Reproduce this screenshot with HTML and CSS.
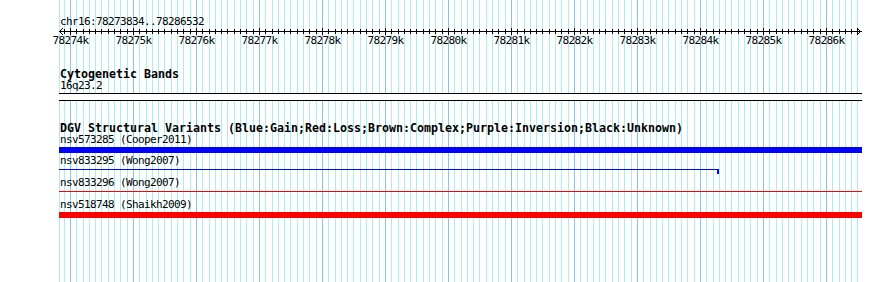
FILE: index.html
```html
<!DOCTYPE html>
<html lang="en">
<head>
    <meta charset="UTF-8">
    <title>chr16:78273834..78286532</title>
    <link rel="stylesheet" href="styles.css">
</head>
<body>

    <div class="panel">
        <!-- Grid lines behind the tracks -->
        <svg class="grid" id="grid" width="890" height="282"></svg>

        <div class="tracks">
            <!-- Ruler -->
            <div class="ruler">
                <div class="label">chr16:78273834..78286532</div>
                <svg class="scale" id="scale" width="803" height="18"></svg>
            </div>

            <!-- Cytogenetic bands track -->
            <div class="track cyto">
                <div class="track-title">Cytogenetic Bands</div>
                <div class="label">16q23.2</div>
                <div class="band"></div>
            </div>

            <!-- DGV track -->
            <div class="track dgv">
                <div class="track-title">DGV Structural Variants (Blue:Gain;Red:Loss;Brown:Complex;Purple:Inversion;Black:Unknown)</div>

                <div class="feature">
                    <div class="label">nsv573285 (Cooper2011)</div>
                    <div class="glyph"><div class="bar gain"></div></div>
                </div>

                <div class="feature">
                    <div class="label">nsv833295 (Wong2007)</div>
                    <div class="glyph">
                        <div class="line gain" style="width: 659px"></div>
                        <div class="cap gain" style="left: 658px"></div>
                    </div>
                </div>

                <div class="feature">
                    <div class="label">nsv833296 (Wong2007)</div>
                    <div class="glyph"><div class="line loss"></div></div>
                </div>

                <div class="feature">
                    <div class="label">nsv518748 (Shaikh2009)</div>
                    <div class="glyph"><div class="bar loss"></div></div>
                </div>
            </div>
        </div>
    </div>

    <script>
        const start = 78273834;
        const end = 78286532;
        const ns = 'http://www.w3.org/2000/svg';

        // Genome position to pixel column
        function toX(pos) {
            return Math.floor(60 + (pos - start) * 800 / (end - start));
        }

        function add(svg, tag, attrs, text) {
            const el = document.createElementNS(ns, tag);
            for (const k in attrs) el.setAttribute(k, attrs[k]);
            if (text) el.textContent = text;
            svg.appendChild(el);
            return el;
        }

        const grid = document.getElementById('grid');
        const scale = document.getElementById('scale');

        // Left edge line of the grid
        add(grid, 'line', { x1: 59.5, y1: 0, x2: 59.5, y2: 282, class: 'minor' });

        // Ruler base line and arrows
        add(scale, 'line', { x1: 0, y1: 3.5, x2: 803, y2: 3.5, class: 'axis' });
        add(scale, 'polyline', { points: '4,0 0.5,3.5 4,7', class: 'arrow' });
        add(scale, 'polyline', { points: '798,0 801.5,3.5 798,7', class: 'arrow' });

        for (let p = Math.ceil(start / 100) * 100; p <= end; p += 100) {
            const x = toX(p) + 0.5;
            const major = p % 1000 === 0;
            add(grid, 'line', { x1: x, y1: 0, x2: x, y2: 282, class: major ? 'major' : 'minor' });

            const lx = x - 59;
            add(scale, 'line', { x1: lx, y1: major ? 0 : 1, x2: lx, y2: major ? 7 : 6, class: 'tick' });
            if (major) {
                add(scale, 'text', { x: lx, y: 16, 'text-anchor': 'middle', class: 'tick-label' }, (p / 1000) + 'k');
            }
        }
    </script>

</body>
</html>
```

FILE: styles.css
```css
/* General body styling */
body {
    margin: 0;
    padding: 0;
    background-color: white;
}

.panel {
    position: relative;
    width: 890px;
    height: 282px;
    overflow: hidden;
}

/* Grid sits behind everything */
.grid {
    position: absolute;
    top: 0;
    left: 0;
    shape-rendering: crispEdges;
}

.grid .minor {
    stroke: #aaeeee;
    stroke-width: 1;
}

.grid .major {
    stroke: #88c4e8;
    stroke-width: 1;
}

.tracks {
    position: relative;
    width: 803px;
    padding: 16px 0 0 59px;
}

/* Text */
.label {
    font-family: "DejaVu Sans Mono", monospace;
    font-size: 11px;
    line-height: 12px;
    letter-spacing: -0.62px;
    white-space: pre;
    padding-left: 1px;
    color: black;
}

.track-title {
    font-family: "DejaVu Sans Mono", monospace;
    font-weight: bold;
    font-size: 11.63px;
    line-height: 12px;
    white-space: pre;
    padding-left: 1px;
    color: black;
}

/* Ruler */
.scale {
    display: block;
    overflow: visible;
}

.scale .axis,
.scale .tick {
    stroke: black;
    stroke-width: 1;
    shape-rendering: crispEdges;
}

.scale .arrow {
    fill: none;
    stroke: black;
    stroke-width: 1;
}

.scale .tick-label {
    font-family: "DejaVu Sans Mono", monospace;
    font-size: 11px;
    letter-spacing: -0.62px;
    fill: black;
}

/* Tracks */
.cyto {
    margin-top: 22px;
}

.band {
    margin-top: 1px;
    height: 8px;
    box-sizing: border-box;
    border-top: 1px solid black;
    border-bottom: 1px solid black;
    background-color: white;
}

.dgv {
    margin-top: 21px;
}

.feature {
    padding-bottom: 2px;
}

.glyph {
    position: relative;
    height: 6px;
    margin-top: 1px;
}

.bar {
    height: 6px;
}

.line {
    height: 1px;
    margin-top: 2px;
}

.cap {
    position: absolute;
    top: 0;
    width: 2px;
    height: 5px;
}

.gain {
    background-color: #0000ff;
}

.loss {
    background-color: #ff0000;
}
```
